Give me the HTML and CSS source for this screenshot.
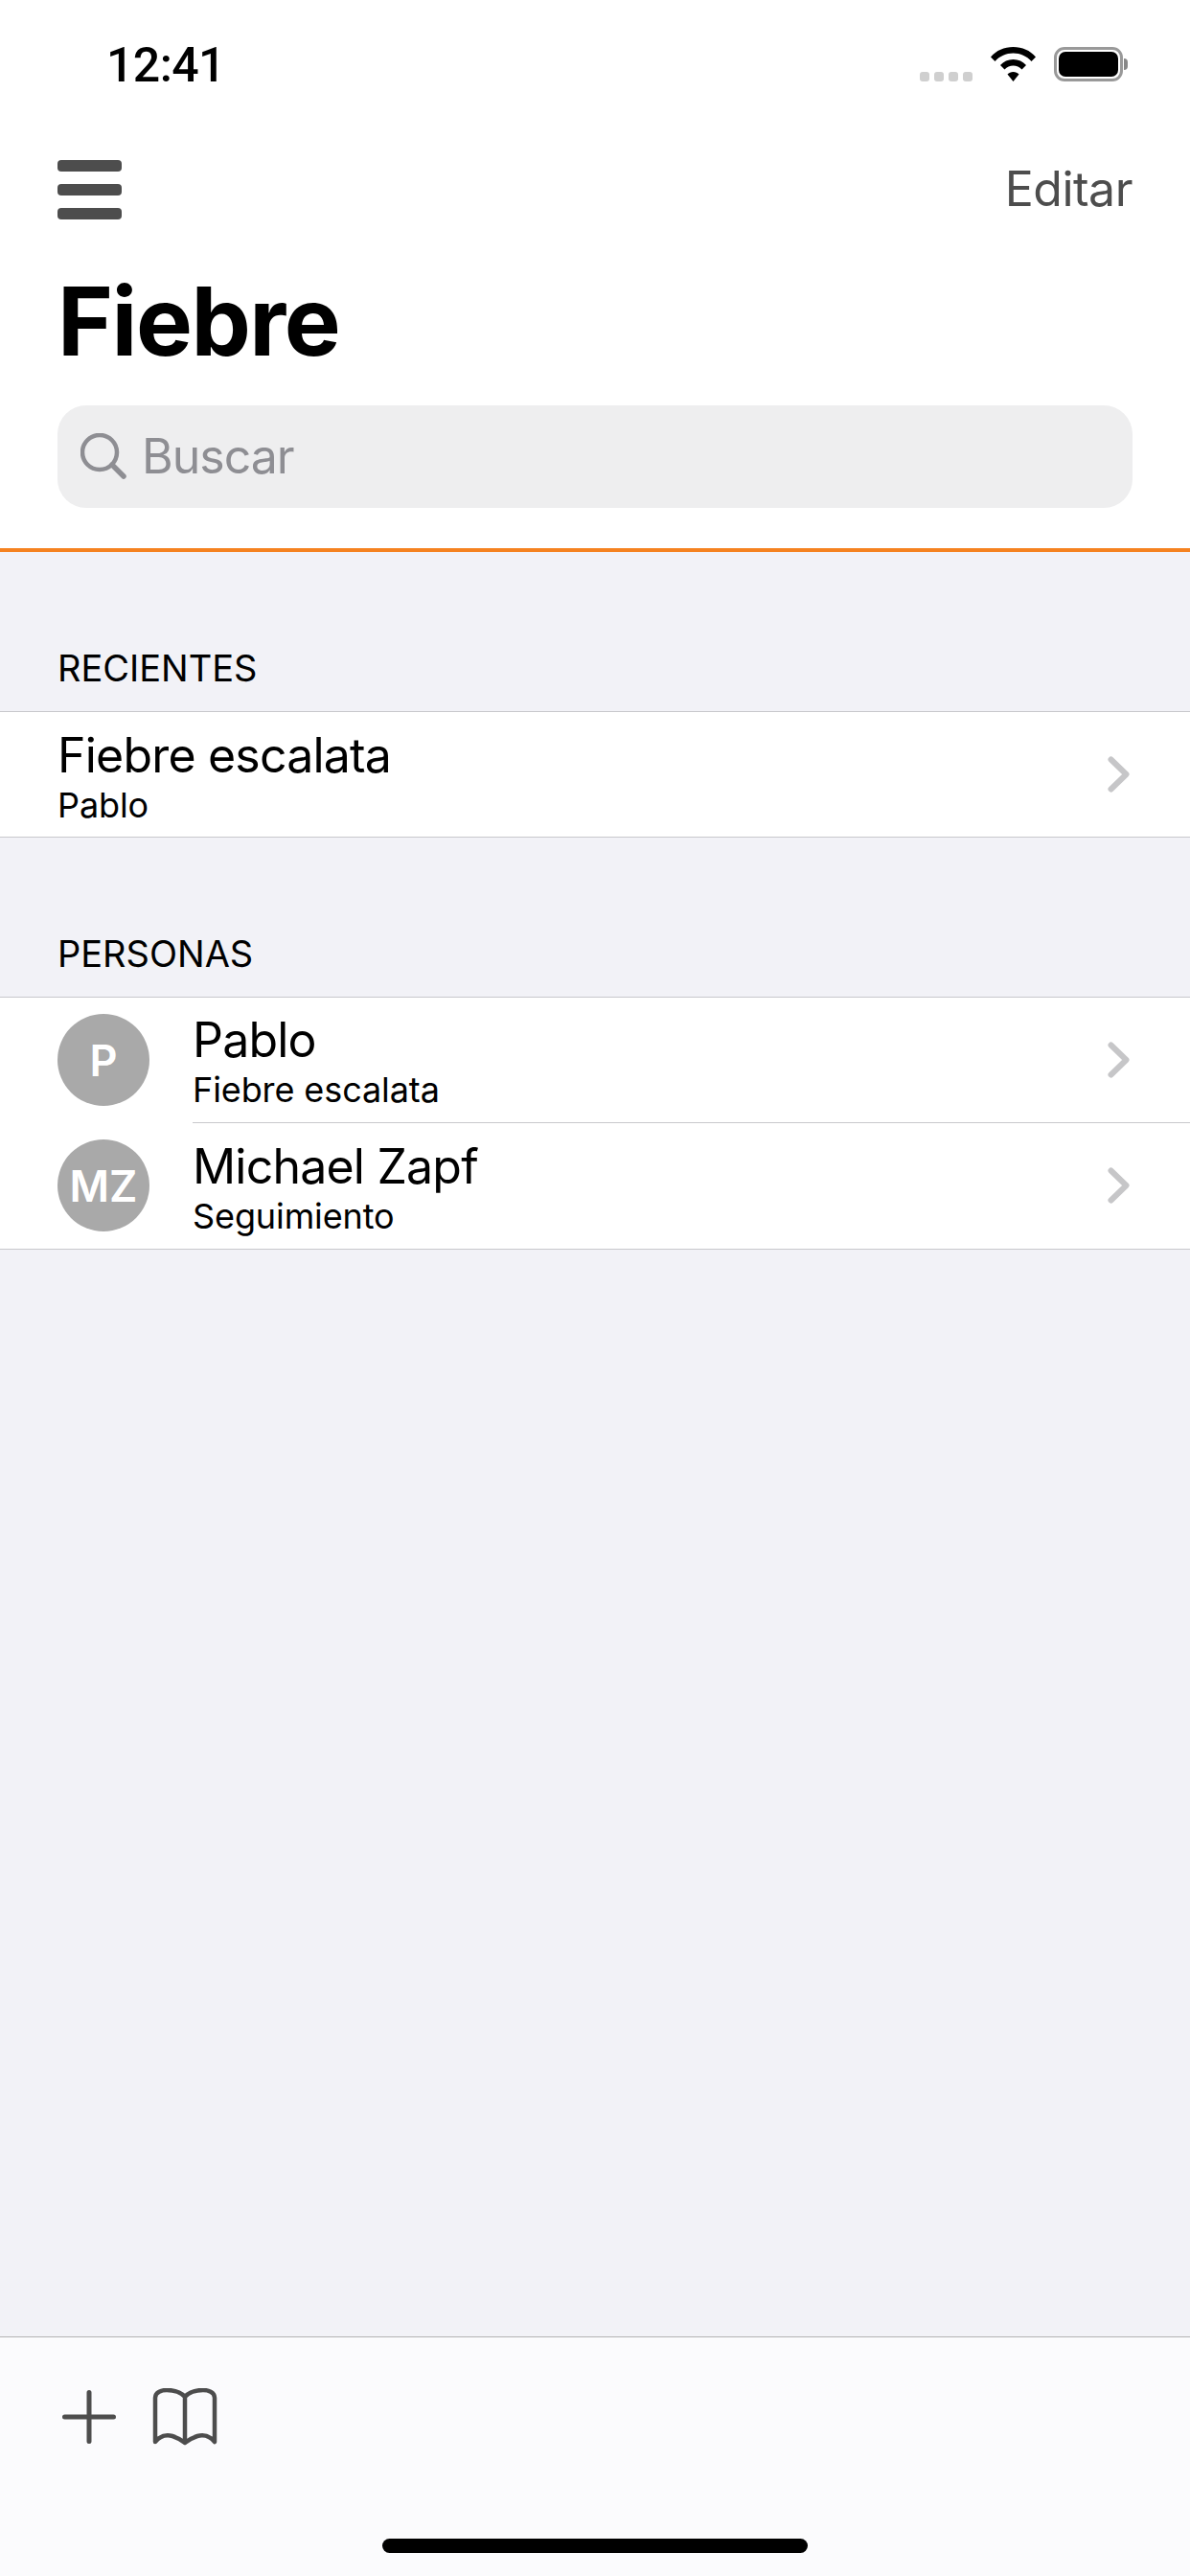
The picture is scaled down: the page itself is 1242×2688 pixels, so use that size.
FILE: index.html
```html
<!DOCTYPE html>
<html lang="es">
<head>
<meta charset="utf-8">
<title>Fiebre</title>
<link rel="stylesheet" href="styles.css">
</head>
<body>
<div class="app">
  <header class="top">
    <div class="status">
      <span class="time">12:41</span>
      <div class="status-icons">
        <div class="dots"><i></i><i></i><i></i><i></i></div>
        <svg class="wifi" viewBox="0 0 47 36" width="47" height="36"><path fill="#000" d="M23.500 0C33 0 41 3.500 47 10.500L42.500 15C37.500 9.500 31 6.500 23.500 6.500S9.500 9.500 4.500 15L0 10.500C6 3.500 14 0 23.500 0Z"/><path fill="#000" d="M23.500 13C29 13 33.500 15 37 19L32.500 23.500C30 21 27 19.500 23.500 19.500S17 21 14.500 23.500L10 19C13.500 15 18 13 23.500 13Z"/><path fill="#000" d="M23.500 26C26 26 28 27 29.500 28.500L23.500 36L17.500 28.500C19 27 21 26 23.500 26Z"/></svg>
        <div class="battery"><div class="battery-body"><div class="battery-fill"></div></div><div class="battery-cap"></div></div>
      </div>
    </div>
    <div class="nav">
      <div class="burger"><i></i><i></i><i></i></div>
      <span class="edit">Editar</span>
    </div>
    <h1 class="title">Fiebre</h1>
    <div class="search">
      <svg class="search-icon" viewBox="0 0 48 48" width="48" height="48"><circle cx="20" cy="20" r="18" fill="none" stroke="#8e8e93" stroke-width="4.500"/><path d="M33 33L45 45" stroke="#8e8e93" stroke-width="5.500" stroke-linecap="round"/></svg>
      <span class="search-text">Buscar</span>
    </div>
  </header>

  <main class="content">
    <section class="group">
      <h2 class="group-title">RECIENTES</h2>
      <div class="rows">
        <div class="row">
          <div class="row-text"><div class="row-name">Fiebre escalata</div><div class="row-sub">Pablo</div></div>
          <svg class="chev" viewBox="0 0 24 38" width="24" height="38"><path d="M3.500 3.500L19.500 19L3.500 34.500" fill="none" stroke="#c6c6c8" stroke-width="6" stroke-linecap="round" stroke-linejoin="round"/></svg>
        </div>
      </div>
    </section>
    <section class="group">
      <h2 class="group-title">PERSONAS</h2>
      <div class="rows">
        <div class="row person">
          <div class="avatar">P</div>
          <div class="row-main">
            <div class="row-text"><div class="row-name">Pablo</div><div class="row-sub">Fiebre escalata</div></div>
            <svg class="chev" viewBox="0 0 24 38" width="24" height="38"><path d="M3.500 3.500L19.500 19L3.500 34.500" fill="none" stroke="#c6c6c8" stroke-width="6" stroke-linecap="round" stroke-linejoin="round"/></svg>
          </div>
        </div>
        <div class="row person">
          <div class="avatar">MZ</div>
          <div class="row-main last">
            <div class="row-text"><div class="row-name">Michael Zapf</div><div class="row-sub">Seguimiento</div></div>
            <svg class="chev" viewBox="0 0 24 38" width="24" height="38"><path d="M3.500 3.500L19.500 19L3.500 34.500" fill="none" stroke="#c6c6c8" stroke-width="6" stroke-linecap="round" stroke-linejoin="round"/></svg>
          </div>
        </div>
      </div>
    </section>
  </main>

  <footer class="toolbar">
    <div class="tools">
      <svg viewBox="0 0 56 56" width="56" height="56"><path d="M2.500 28H53.500M28 2.500V53.500" fill="none" stroke="#4d4d4d" stroke-width="5" stroke-linecap="round"/></svg>
      <svg viewBox="0 0 68 60" width="68" height="60"><path d="M34 9C29 3.500 22 2 15 2C10 2 3 4 3 10V56C8 50 14 48 21 50C26 51.500 30 54 34 57C38 54 42 51.500 47 50C54 48 60 50 65 56V10C65 4 58 2 53 2C46 2 39 3.500 34 9ZM34 9V57" fill="none" stroke="#4d4d4d" stroke-width="4.500" stroke-linecap="round" stroke-linejoin="round"/></svg>
    </div>
    <div class="home"></div>
  </footer>
</div>
</body>
</html>
```

FILE: styles.css
```css
* { box-sizing: border-box; }
html, body { margin: 0; padding: 0; }
body { width: 1242px; height: 2688px; overflow: hidden; font-family: Inter, "Liberation Sans", sans-serif; color: #000; }
.app { width: 1242px; height: 2688px; display: flex; flex-direction: column; background: #f2f2f7; }

.top { height: 576px; flex: none; background: #fff; border-bottom: 4px solid #f58220; padding: 0 60px; }
.status { height: 136px; margin: 0 -60px; padding: 46px 65px 0 111px; display: flex; justify-content: space-between; align-items: flex-start; }
.time { font-family: Roboto, sans-serif; font-size: 50px; line-height: 44px; font-weight: 500; letter-spacing: -0.6px; }
.status-icons { display: flex; align-items: flex-start; padding-top: 3px; }
.dots { display: flex; gap: 5px; margin-top: 26px; margin-right: 19px; }
.dots i { width: 10px; height: 10px; border-radius: 3px; background: #cfcfcf; }
.wifi { margin-right: 19px; display: block; }
.battery { display: flex; align-items: center; height: 36px; }
.battery-body { width: 72px; height: 36px; border: 3px solid #999; border-radius: 11px; padding: 2px; }
.battery-fill { width: 100%; height: 100%; background: #000; border-radius: 7px; }
.battery-cap { width: 4px; height: 12px; margin-left: 1px; background: #888; border-radius: 0 6px 6px 0; }

.nav { height: 139px; display: flex; justify-content: space-between; align-items: flex-start; }
.burger { width: 67px; display: flex; flex-direction: column; gap: 13px; padding-top: 31px; }
.burger i { display: block; width: 67px; height: 12px; border-radius: 4px; background: #4d4d4d; }
.edit { font-size: 50px; line-height: 60px; color: #4d4d4d; letter-spacing: -0.5px; margin-top: 31px; }

.title { margin: 0; font-size: 99px; line-height: 120px; font-weight: 700; letter-spacing: -1.500px; }
.search { height: 107px; margin-top: 28px; border-radius: 30px; background: #eeeeef; display: flex; align-items: center; padding: 0 0 2px 24px; gap: 16px; }
.search-text { font-size: 50px; color: #8e8e93; letter-spacing: -1px; }

.content { flex: 1; }
.group-title { margin: 0; padding: 0 60px; font-size: 38px; font-weight: 400; line-height: 46px; }
.group:first-child { padding-top: 98px; }
.group:first-child .group-title { height: 68px; }
.group:last-child { padding-top: 98px; }
.group:last-child .group-title { height: 67.500px; }
.rows { background: #fff; border-top: 1.500px solid #c8c8cc; border-bottom: 1.500px solid #c8c8cc; }
.row { display: flex; align-items: center; justify-content: space-between; padding: 0 62px 0 60px; height: 130px; }
.row-text { padding-top: 4px; }
.row-name { font-size: 50px; line-height: 57px; letter-spacing: -0.8px; }
.row-sub { font-size: 36px; line-height: 42px; letter-spacing: -0.1px; margin-top: 2px; }
.chev { flex: none; display: block; }

.person { padding: 0; height: 131px; }
.avatar { flex: none; width: 96px; height: 96px; margin-left: 60px; margin-right: 45px; border-radius: 50%; background: #a9a9a9; color: #fff; font-size: 45px; font-weight: 600; display: flex; align-items: center; justify-content: center; }
.row-main { flex: 1; height: 100%; display: flex; align-items: center; justify-content: space-between; padding-right: 62px; border-bottom: 1.500px solid #c8c8cc; }
.row-main.last { border-bottom: 0; }

.toolbar { height: 250px; flex: none; background: #fbfbfd; border-top: 1.500px solid #b3b3b3; display: flex; flex-direction: column; padding: 53px 0 0 65px; }
.tools { display: flex; align-items: center; gap: 38px; }
.tools svg { display: block; }
.home { width: 444px; height: 15px; border-radius: 7.500px; background: #000; margin: 97px 0 0 334px; }
```
